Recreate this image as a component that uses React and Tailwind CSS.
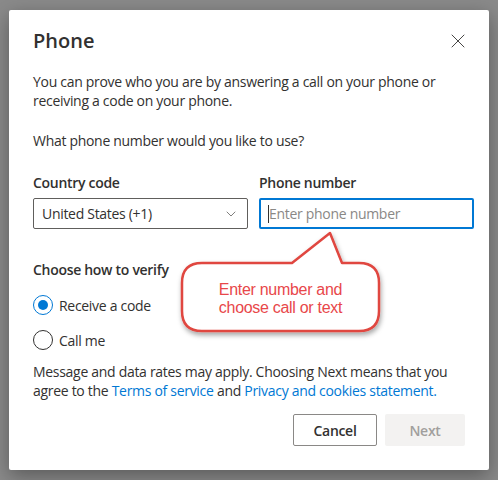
import { X, ChevronDown } from 'lucide-react';

function Radio({ checked, label }) {
  return (
    <label className="flex h-5 items-center gap-[6px]">
      <span
        className={
          'flex h-5 w-5 items-center justify-center rounded-full border ' +
          (checked ? 'border-[#0078d4]' : 'border-[#323130]')
        }
      >
        {checked && <span className="h-[10px] w-[10px] rounded-full bg-[#0078d4]" />}
      </span>
      <span>{label}</span>
    </label>
  );
}

function Callout() {
  return (
    <div className="pointer-events-none absolute left-[170px] top-[222px] h-[120px] w-[220px]">
      <svg width="220" height="120" viewBox="170 222 220 120" className="absolute inset-0">
        <defs>
          <filter id="sh" x="-20%" y="-20%" width="140%" height="160%">
            <feDropShadow dx="1" dy="3" stdDeviation="2.5" floodColor="#000" floodOpacity="0.35" />
          </filter>
        </defs>
        <path
          d="M202 263 L292 263 L330 233 L342 263 L359 263 Q379 263 379 283 L379 311 Q379 331 359 331 L202 331 Q182 331 182 311 L182 283 Q182 263 202 263 Z"
          fill="#fff"
          stroke="#e0463f"
          strokeWidth="2.5"
          strokeLinejoin="round"
          filter="url(#sh)"
        />
      </svg>
      <div className="absolute left-[12px] top-[59px] w-[197px] text-center font-['Liberation_Sans',Arial,sans-serif] text-[16px] leading-[18px] text-[#e8474a]">
        Enter number and
        <br />
        choose call or text
      </div>
    </div>
  );
}

export default function App() {
  return (
    <div className="relative h-[480px] w-[498px] overflow-hidden bg-[#8a8a8a] pt-[10px] pl-[9px] font-['Open_Sans',sans-serif] text-[14px] tracking-[-0.3px] text-[#323130]">
      <div className="relative h-[460px] w-[480px] rounded-[2px] bg-white px-6 shadow-[0_6px_20px_rgba(0,0,0,0.35)]">
        <div className="flex h-[62px] items-start justify-between pt-[17px]">
          <h1 className="text-[20px] font-semibold leading-[28px] tracking-normal">Phone</h1>
          <button className="-mr-[5px] mt-[2px] text-[#323130]">
            <X size={24} strokeWidth={0.9} />
          </button>
        </div>

        <p className="leading-[19px] whitespace-nowrap">
          You can prove who you are by answering a call on your phone or
          <br />
          receiving a code on your phone.
        </p>
        <p className="mt-[21px] leading-[19px]">What phone number would you like to use?</p>

        <div className="mt-[23px] grid w-[441px] grid-cols-2 gap-[11px]">
          <div>
            <div className="font-semibold leading-[19px]">Country code</div>
            <div className="mt-[6px] flex h-[31px] items-center justify-between rounded-[2px] border border-[#605e5c] pl-[8px] pr-[8px]">
              <span>United States (+1)</span>
              <ChevronDown size={16} strokeWidth={1.2} className="text-[#605e5c]" />
            </div>
          </div>
          <div>
            <div className="font-semibold leading-[19px]">Phone number</div>
            <div className="mt-[6px] flex h-[31px] items-center rounded-[2px] border-2 border-[#0078d4] pl-[7px]">
              <span className="h-[18px] w-px bg-[#323130]" />
              <span className="text-[#8a8886]">Enter phone number</span>
            </div>
          </div>
        </div>

        <div className="mt-[31px] font-semibold leading-[19px]">Choose how to verify</div>
        <div className="mt-[16px] flex flex-col gap-[15px]">
          <Radio checked label="Receive a code" />
          <Radio label="Call me" />
        </div>

        <p className="mt-[12px] leading-[19px] whitespace-nowrap">
          Message and data rates may apply. Choosing Next means that you
          <br />
          agree to the <span className="text-[#0078d4]">Terms of service</span> and{' '}
          <span className="text-[#0078d4]">Privacy and cookies statement.</span>
        </p>

        <div className="mt-[14px] flex justify-end gap-2">
          <button className="h-[32px] w-[84px] rounded-[2px] border border-[#8a8886] font-semibold text-[#323130]">
            Cancel
          </button>
          <button className="h-[32px] w-[80px] rounded-[2px] bg-[#f3f2f1] font-semibold text-[#a19f9d]">
            Next
          </button>
        </div>
      </div>
      <Callout />
    </div>
  );
}
